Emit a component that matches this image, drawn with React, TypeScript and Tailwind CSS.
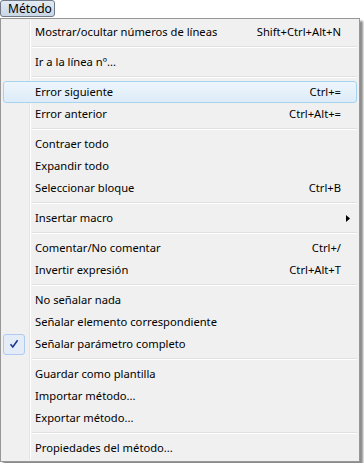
import React from "react";

type Item =
  | { type: "sep" }
  | { type: "item"; label: string; shortcut?: string; hl?: boolean; checked?: boolean; sub?: boolean };

const items: Item[] = [
  { type: "item", label: "Mostrar/ocultar números de líneas", shortcut: "Shift+Ctrl+Alt+N" },
  { type: "sep" },
  { type: "item", label: "Ir a la línea nº..." },
  { type: "sep" },
  { type: "item", label: "Error siguiente", shortcut: "Ctrl+=", hl: true },
  { type: "item", label: "Error anterior", shortcut: "Ctrl+Alt+=" },
  { type: "sep" },
  { type: "item", label: "Contraer todo" },
  { type: "item", label: "Expandir todo" },
  { type: "item", label: "Seleccionar bloque", shortcut: "Ctrl+B" },
  { type: "sep" },
  { type: "item", label: "Insertar macro", sub: true },
  { type: "sep" },
  { type: "item", label: "Comentar/No comentar", shortcut: "Ctrl+/" },
  { type: "item", label: "Invertir expresión", shortcut: "Ctrl+Alt+T" },
  { type: "sep" },
  { type: "item", label: "No señalar nada" },
  { type: "item", label: "Señalar elemento correspondiente" },
  { type: "item", label: "Señalar parámetro completo", checked: true },
  { type: "sep" },
  { type: "item", label: "Guardar como plantilla" },
  { type: "item", label: "Importar método..." },
  { type: "item", label: "Exportar método..." },
  { type: "sep" },
  { type: "item", label: "Propiedades del método..." },
];

export default function App() {
  return (
    <div
      className="w-[364px] h-[463px] bg-white overflow-hidden text-[11.2px] text-black"
      style={{ fontFamily: '"Noto Sans", "Liberation Sans", sans-serif' }}
    >
      <div className="h-[18px] flex items-start">
        <div className="h-[17px] w-[55px] rounded-[3px] border border-[#6f7a86] bg-gradient-to-b from-[#e3ebf4] to-[#c9d6e5] flex items-center pl-[7px] leading-none text-[12px]">
          Método
        </div>
      </div>
      <div className="w-[360px] border border-[#979797] bg-[#f0f0f0] p-[2px] shadow-[3px_3px_2px_rgba(0,0,0,0.45)]">
        {items.map((it, i) =>
          it.type === "sep" ? (
            <div key={i} className="h-[8px] flex">
              <div className="w-[27px] shrink-0 border-r border-[#e2e3e3]" />
              <div className="w-px bg-white" />
              <div className="flex-1 flex flex-col justify-center pl-[1px]">
                <div className="h-px bg-[#e0e0e0]" />
                <div className="h-px bg-white" />
              </div>
            </div>
          ) : it.hl ? (
            <div
              key={i}
              className="h-[22px] flex items-center rounded-[3px] border border-[#a8d3ee] bg-gradient-to-b from-[#eef6fc] to-[#dcecf8]"
            >
              <div className="w-[30px] shrink-0" />
              <div className="flex-1 pl-[1px]">{it.label}</div>
              <div className="pr-[15px]">{it.shortcut}</div>
            </div>
          ) : (
            <div key={i} className="h-[22px] flex items-center">
              <div className="w-[27px] h-full shrink-0 border-r border-[#e2e3e3] flex items-center">
                {it.checked && (
                  <div className="w-[22px] h-[21px] rounded-[3px] border border-[#aecaf0] bg-[#e4ecf7] flex items-center justify-center">
                    <svg width="10" height="10" viewBox="0 0 10 10">
                      <path d="M1.5 5.2 L3.8 8 L8.6 1.2" stroke="#1d3a92" strokeWidth="1.6" fill="none" />
                    </svg>
                  </div>
                )}
              </div>
              <div className="w-px h-full bg-white" />
              <div className="flex-1 pl-[4px] whitespace-nowrap">{it.label}</div>
              {it.shortcut && <div className="pr-[16px] whitespace-nowrap">{it.shortcut}</div>}
              {it.sub && (
                <div className="pr-[7px]">
                  <svg width="4" height="7" viewBox="0 0 4 7">
                    <path d="M0 0 L4 3.5 L0 7 Z" fill="#000" />
                  </svg>
                </div>
              )}
            </div>
          )
        )}
      </div>
    </div>
  );
}
